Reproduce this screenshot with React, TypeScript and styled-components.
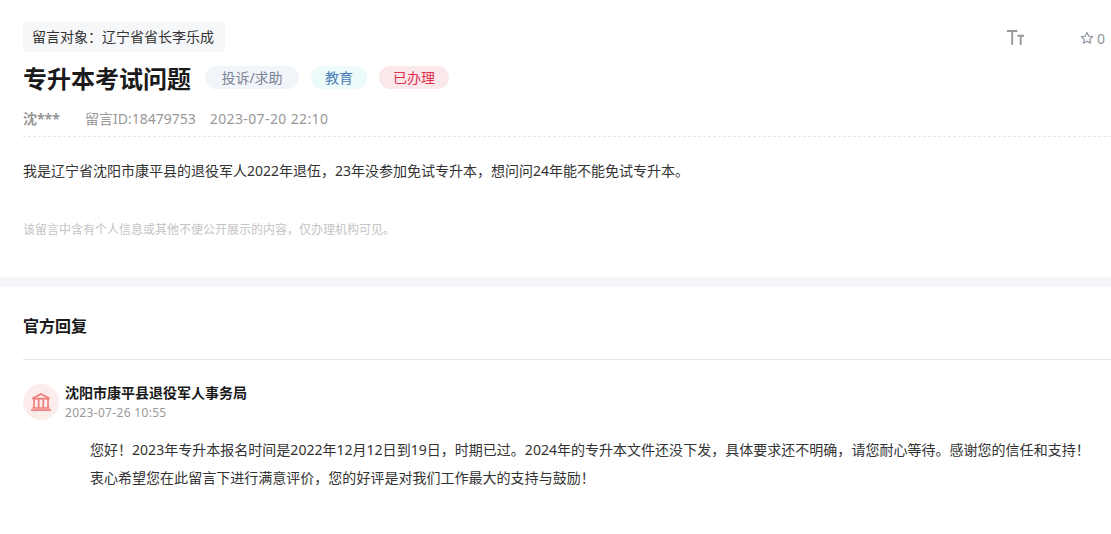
import styled, { createGlobalStyle } from "styled-components";

const GlobalStyle = createGlobalStyle`
  html, body { margin: 0; padding: 0; background: #fff; }
  body {
    width: 1111px;
    height: 534px;
    overflow: hidden;
    font-family: "Noto Sans", "Noto Sans CJK SC", sans-serif;
    color: #333;
  }
`;

const Page = styled.div`
  width: 1111px;
`;

const Question = styled.section`
  padding: 22px 0 0 23px;
  height: 277px;
  box-sizing: border-box;
`;

const TopRow = styled.div`
  display: flex;
  justify-content: space-between;
  align-items: flex-start;
`;

const TargetTag = styled.div`
  height: 30px;
  line-height: 30px;
  padding: 0 11px 0 9px;
  background: #f6f7f9;
  border-radius: 3px;
  font-size: 14px;
  color: #333;
`;

const Tools = styled.div`
  display: flex;
  align-items: center;
  height: 32px;
  color: #999;
`;

const FontSizeIcon = styled.svg`
  width: 17px;
  height: 15px;
  margin-right: 56px;
  margin-top: -1px;
`;

const Favorites = styled.div`
  display: flex;
  align-items: center;
  gap: 3px;
  width: 31px;
  font-size: 14px;
  color: #8f96a3;
`;

const TitleRow = styled.div`
  display: flex;
  align-items: center;
  margin-top: 12px;
  height: 23px;
`;

const Title = styled.h1`
  margin: 0 14px 0 0;
  font-size: 24px;
  font-weight: 700;
  color: #1a1a1a;
  white-space: nowrap;
`;

const Chip = styled.span<{ $bg: string; $color: string; $w: number }>`
  display: inline-block;
  box-sizing: border-box;
  width: ${(p) => p.$w}px;
  height: 23px;
  line-height: 23px;
  margin-right: 12px;
  border-radius: 12px;
  text-align: center;
  font-size: 14px;
  background: ${(p) => p.$bg};
  color: ${(p) => p.$color};
`;

const Meta = styled.div`
  display: flex;
  align-items: center;
  margin-top: 19px;
  height: 20px;
  padding-bottom: 8px;
  border-bottom: 1px dashed #e6e6e6;
  font-size: 14px;
  color: #999;
`;

const Author = styled.span`
  width: 62px;
  font-weight: 700;
`;

const MetaItem = styled.span<{ $spread?: boolean }>`
  margin-right: 14px;
  letter-spacing: ${(p) => (p.$spread ? "0.38px" : "0")};
`;

const Body = styled.p`
  margin: 23px 0 0;
  font-size: 14px;
  line-height: 22px;
  color: #333;
`;

const Notice = styled.p`
  margin: 38px 0 0;
  font-size: 12px;
  line-height: 20px;
  color: #c4c4c4;
`;

const Band = styled.div`
  height: 10px;
  background: #f5f6fa;
`;

const ReplyHeader = styled.h2`
  margin: 0 0 0 23px;
  height: 73px;
  line-height: 78px;
  box-sizing: border-box;
  border-bottom: 1px solid #e6e6e6;
  font-size: 16px;
  font-weight: 700;
  color: #1a1a1a;
`;

const Reply = styled.section`
  padding: 24px 0 0 23px;
`;

const ReplyHead = styled.div`
  display: flex;
  gap: 6px;
`;

const Avatar = styled.div`
  display: flex;
  align-items: center;
  justify-content: center;
  width: 36px;
  height: 36px;
  border-radius: 50%;
  background: #fdecec;
`;

const OrgName = styled.div`
  font-size: 14px;
  font-weight: 700;
  line-height: 18px;
  color: #1a1a1a;
`;

const ReplyDate = styled.div`
  margin-top: 2px;
  font-size: 12px;
  line-height: 18px;
  letter-spacing: 0.32px;
  color: #999;
`;

const ReplyText = styled.p`
  margin: 14px 0 0 67px;
  width: 1000px;
  font-size: 14px;
  line-height: 28px;
  letter-spacing: 0.02px;
  color: #333;
`;

export default function App() {
  return (
    <Page>
      <GlobalStyle />
      <Question>
        <TopRow>
          <TargetTag>留言对象：辽宁省省长李乐成</TargetTag>
          <Tools>
            <FontSizeIcon viewBox="0 0 17 15" fill="none" stroke="#999" strokeWidth="1.9">
              <path d="M0 1h10.5M5.2 1v14M10.5 5.8h6.5M13.7 5.8v9.2" />
            </FontSizeIcon>
            <Favorites>
              <svg width="14" height="14" viewBox="0 0 24 24" fill="none" stroke="#8f96a3" strokeWidth="2" strokeLinejoin="round">
                <path d="M12 2.5l2.9 6.2 6.8.8-5 4.6 1.4 6.7-6.1-3.4-6.1 3.4 1.4-6.7-5-4.6 6.8-.8z" />
              </svg>
              0
            </Favorites>
          </Tools>
        </TopRow>
        <TitleRow>
          <Title>专升本考试问题</Title>
          <Chip $bg="#f1f4f9" $color="#7a8494" $w={94}>投诉/求助</Chip>
          <Chip $bg="#ecfbf9" $color="#4a7ab5" $w={56}>教育</Chip>
          <Chip $bg="#fbe8ea" $color="#e0304e" $w={70}>已办理</Chip>
        </TitleRow>
        <Meta>
          <Author>沈***</Author>
          <MetaItem>留言ID:18479753</MetaItem>
          <MetaItem $spread>2023-07-20 22:10</MetaItem>
        </Meta>
        <Body>我是辽宁省沈阳市康平县的退役军人2022年退伍，23年没参加免试专升本，想问问24年能不能免试专升本。</Body>
        <Notice>该留言中含有个人信息或其他不便公开展示的内容，仅办理机构可见。</Notice>
      </Question>
      <Band />
      <ReplyHeader>官方回复</ReplyHeader>
      <Reply>
        <ReplyHead>
          <Avatar>
            <svg width="20" height="18" viewBox="0 0 20 18" fill="none" stroke="#ee7f7c" strokeWidth="1.7">
              <path d="M1.5 5.6L10 1l8.5 4.6zM3 6v9M7.7 6v9M12.3 6v9M17 6v9M1.5 15h17M0 17.1h20" />
            </svg>
          </Avatar>
          <div>
            <OrgName>沈阳市康平县退役军人事务局</OrgName>
            <ReplyDate>2023-07-26 10:55</ReplyDate>
          </div>
        </ReplyHead>
        <ReplyText>
          您好！2023年专升本报名时间是2022年12月12日到19日，时期已过。2024年的专升本文件还没下发，具体要求还不明确，请您耐心等待。感谢您的信任和支持！衷心希望您在此留言下进行满意评价，您的好评是对我们工作最大的支持与鼓励！
        </ReplyText>
      </Reply>
    </Page>
  );
}
